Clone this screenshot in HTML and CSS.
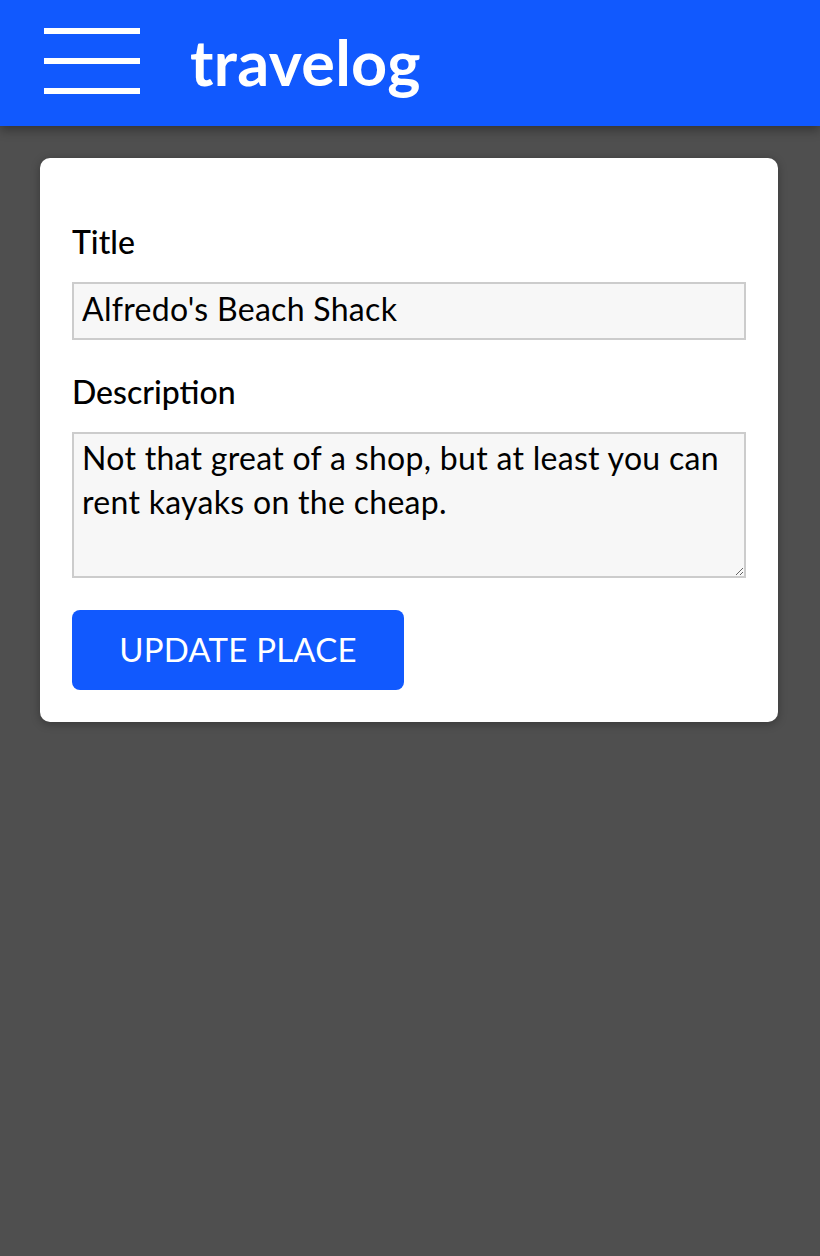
FILE: index.html
```html
<!DOCTYPE html>
<html lang="en">
<head>
<meta charset="utf-8">
<title>travelog</title>
<link rel="stylesheet" href="styles.css">
</head>
<body>
<header class="topbar">
  <button class="menu-btn" aria-label="Menu">
    <span class="bar"></span>
    <span class="bar"></span>
    <span class="bar"></span>
  </button>
  <h1 class="logo">travelog</h1>
</header>
<main class="content">
  <form class="card">
    <div class="field">
      <label class="label" for="title">Title</label>
      <input class="input" id="title" type="text" value="Alfredo's Beach Shack">
    </div>
    <div class="field">
      <label class="label" for="desc">Description</label>
      <textarea class="input textarea" id="desc" rows="3">Not that great of a shop, but at least you can rent kayaks on the cheap.</textarea>
    </div>
    <button class="submit" type="button">UPDATE PLACE</button>
  </form>
</main>
</body>
</html>
```
FILE: styles.css
```css
* { box-sizing: border-box; }
html, body { margin: 0; padding: 0; }
body {
  background: #4f4f4f;
  font-family: "Lato", "Open Sans", sans-serif;
  color: #000;
  min-height: 1256px;
}
.topbar {
  height: 126px;
  background: #1159fe;
  display: flex;
  align-items: center;
  padding-left: 44px;
  gap: 50px;
  box-shadow: 0 4px 10px rgba(0,0,0,0.35);
  position: relative;
  z-index: 1;
}
.menu-btn {
  width: 96px;
  height: 66px;
  padding: 0;
  border: none;
  background: transparent;
  display: flex;
  flex-direction: column;
  justify-content: space-between;
  align-self: flex-start;
  margin-top: 28px;
}
.bar {
  display: block;
  width: 96px;
  height: 6px;
  background: #fff;
}
.logo {
  margin: 0;
  color: #fff;
  font-size: 63px;
  font-weight: 700;
  letter-spacing: 0.3px;
  line-height: 1;
  padding-bottom: 4px;
}
.content {
  padding: 32px 42px 32px 40px;
}
.card {
  background: #fff;
  border-radius: 10px;
  box-shadow: 0 2px 10px rgba(0,0,0,0.3);
  padding: 64px 32px 32px;
  display: flex;
  flex-direction: column;
}
.field {
  display: flex;
  flex-direction: column;
  margin-bottom: 32px;
}
.label {
  font-size: 32px;
  line-height: 40px;
  font-weight: 500;
  margin-bottom: 20px;
}
.input {
  width: 100%;
  height: 58px;
  border: 2px solid #cccccc;
  background: #f7f7f7;
  font-family: inherit;
  font-size: 32px;
  letter-spacing: 0.3px;
  color: #000;
  padding: 0 8px 6px;
  margin: 0;
  border-radius: 0;
}
.textarea {
  height: 146px;
  resize: vertical;
  line-height: 44px;
  padding: 2px 8px;
}
.submit {
  align-self: flex-start;
  width: 332px;
  height: 80px;
  background: #1159fe;
  color: #fff;
  border: none;
  border-radius: 8px;
  font-family: inherit;
  font-size: 33px;
  letter-spacing: 0.2px;
  padding: 0 0 2px;
}
```
